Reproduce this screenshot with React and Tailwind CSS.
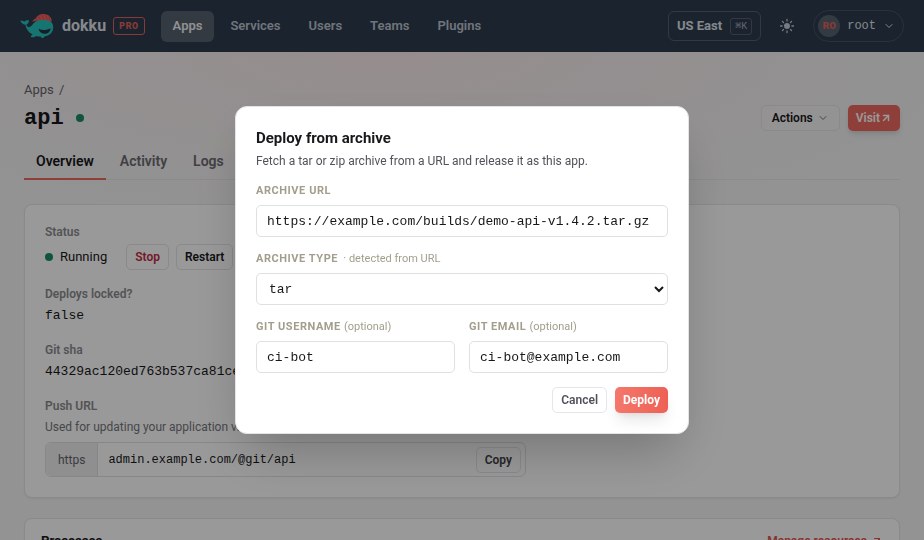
import { useState } from 'react'
import { ChevronDown, ArrowUpRight } from 'lucide-react'

const navItems = ['Apps', 'Services', 'Users', 'Teams', 'Plugins']
const tabs = ['Overview', 'Activity', 'Logs']

const mono = "font-['Liberation_Mono',monospace]"
const labelClass = 'block text-[11px] leading-4 font-bold tracking-wider text-[#a39e8c]'
const hintClass = 'font-normal tracking-normal'
const inputClass =
  "mt-1.5 block h-8 w-full rounded-[5px] border border-[#e0e0e2] bg-white font-['Liberation_Mono',monospace] text-[13px] text-[#18181b] outline-none"
const buttonClass =
  'flex h-[26px] items-center gap-1 rounded-[5px] border border-[#e6e6e9] text-[12px] font-semibold'

function Whale() {
  return (
    <svg className="h-[26px] w-[34px]" viewBox="0 0 34 26" aria-hidden="true">
      <path
        d="M0.300 7.500c1.900.3 3.200.3 4.400 1.100.8-1.100 2.300-1.500 4.300-1.100-.3 2.200-1.200 3.500-2.600 4.200.5 1.900 1.700 2.800 3.200 2.400 2.200-.6 3.200-3.500 5.700-5.300C18.500 6.500 22.500 6 26.200 6.500c4.500.7 7.100 3.800 7 8-.1 5-3.600 8.200-8.700 9-.3.900-1.200 1.700-2.500 1.600-.8-.1-1.200-.7-1.100-1.500-1.700 0-3.300-.2-4.800-.6-.9 1-3.300 1.600-5.300 1.100.1-1.100.8-1.900 1.900-2.500C8.300 19.300 6 15.800 5.400 11.700 2.500 11.300.9 9.900.3 7.500z"
        fill="#26c4bd"
      />
      <path
        d="M12.300 8.700c.6-1.500 1.900-2.700 3.400-3.300C17.200 2.300 20.200.7 24 1c4.700.3 7.500 3.200 7.900 7.600C26 6.400 19 6.200 12.300 8.700z"
        fill="#f6605d"
      />
      <path
        d="M15.500 5.600l1.500 1.600M18 3.300l2.400 3.200M21.300 1.700l2.500 4.700M25.300 1.500l2.100 5.300M28.900 3.500l1.200 4.200"
        stroke="#b34c56"
        strokeWidth="0.7"
      />
      <path d="M18.500 15.800c3.600 1.800 8.200 1.600 12.200-.6-.5 3.600-2.800 5.600-6 5.600-3 0-5.500-1.800-6.200-5z" fill="#263445" />
    </svg>
  )
}

function SunIcon() {
  return (
    <svg className="size-4" viewBox="0 0 16 16" fill="none" stroke="currentColor" strokeWidth="1.3" strokeLinecap="round" aria-hidden="true">
      <circle cx="8" cy="8" r="3" fill="currentColor" stroke="none" />
      <path d="M8 1.500v1.600M8 12.900v1.600M1.500 8h1.600M12.900 8h1.600M3.400 3.400l1.100 1.100M11.500 11.500l1.100 1.100M3.400 12.600l1.100-1.100M11.500 4.500l1.100-1.100" />
    </svg>
  )
}

function Header() {
  return (
    <header className="flex h-[52px] items-center bg-[#2d3b4e] px-5">
      <a href="#" className="flex items-center gap-2 text-[16px] font-bold text-[#dfe3ea]">
        <Whale />
        dokku
      </a>
      <span
        className={`ml-[7px] flex h-[18px] items-center rounded-[3px] border border-[#e2635a] px-[5px] text-[10px] font-bold tracking-wider text-[#e2635a] ${mono}`}
      >
        PRO
      </span>
      <nav className="ml-4 flex gap-1 text-[13px] font-semibold">
        {navItems.map((item, i) => (
          <a
            key={item}
            href="#"
            className={`flex h-[31px] items-center rounded-md px-3 ${
              i === 0 ? 'bg-[#57626f] text-[#eef0f3]' : 'text-[#bdc4ce]'
            }`}
          >
            {item}
          </a>
        ))}
      </nav>
      <div className="ml-auto flex items-center gap-[18px]">
        <button className="flex h-[30px] items-center gap-2 rounded-md border border-[#55606f] px-2 text-[13px] font-bold text-[#dfe3ea]">
          US East
          <kbd className={`flex h-[17px] items-center rounded-[3px] border border-[#55606f] px-1 text-[10px] font-normal text-[#a4acb8] ${mono}`}>
            ⌘K
          </kbd>
        </button>
        <button className="text-[#c6ccd5]" aria-label="Toggle theme">
          <SunIcon />
        </button>
        <button className={`flex h-8 items-center gap-[7px] rounded-full border border-[#465365] pr-2 pl-1 text-[12px] text-[#dfe3ea] ${mono}`}>
          <span className="flex size-[22px] items-center justify-center rounded-full bg-[#57626f] text-[11px] font-bold text-[#e2635a]">
            RO
          </span>
          root
          <ChevronDown size={12} />
        </button>
      </div>
    </header>
  )
}

function Field({ label, children }) {
  return (
    <div>
      <dt className="text-[12px] leading-[15px] font-semibold text-[#8b8b8f]">{label}</dt>
      <dd className="mt-1">{children}</dd>
    </div>
  )
}

function StatusCard() {
  return (
    <section className="mt-6 rounded-lg border border-[#e6e6e9] bg-white p-5 shadow-xs">
      <dl className="flex flex-col gap-[17px] text-[13px] text-[#18181b]">
        <Field label="Status">
          <div className="flex items-center gap-[7px]">
            <span className="size-2 rounded-full bg-[#1b8d67]" />
            <span>Running</span>
            <button className={`${buttonClass} ml-3 px-2 text-[#c22f45]`}>Stop</button>
            <button className={`${buttonClass} px-2`}>Restart</button>
          </div>
        </Field>
        <Field label="Deploys locked?">
          <div className={`leading-5 ${mono}`}>false</div>
        </Field>
        <Field label="Git sha">
          <div className={`leading-5 ${mono}`}>44329ac120ed763b537ca81ce9f20d7a5b6c8e41</div>
        </Field>
        <Field label="Push URL">
          <p className="text-[12px] leading-[18px] text-[#77777c]">Used for updating your application via git push.</p>
          <div className="mt-1.5 flex h-[35px] max-w-[481px] items-center rounded-md border border-[#e2e2e5]">
            <span className="flex h-full items-center rounded-l-md border-r border-[#e2e2e5] bg-[#efeff1] px-3 text-[12px] text-[#63636a]">
              https
            </span>
            <input
              aria-label="Push URL"
              readOnly
              value="admin.example.com/@git/api"
              className={`h-full min-w-0 flex-1 px-2.5 text-[12px] outline-none ${mono}`}
            />
            <button className={`${buttonClass} mr-1 px-2 text-[#3f3f46]`}>Copy</button>
          </div>
        </Field>
      </dl>
    </section>
  )
}

function DeployDialog() {
  const [form, setForm] = useState({
    url: 'https://example.com/builds/demo-api-v1.4.2.tar.gz',
    type: 'tar',
    username: 'ci-bot',
    email: 'ci-bot@example.com',
  })

  const handleChange = (e) => {
    const { name, value } = e.target
    setForm((prev) => ({ ...prev, [name]: value }))
  }

  return (
    <div className="fixed inset-0 flex items-center justify-center bg-black/40 p-4">
      <div
        role="dialog"
        aria-labelledby="deploy-title"
        className="w-full max-w-[454px] rounded-xl border border-[#e4e4e7] bg-white p-5 shadow-2xl"
      >
        <h2 id="deploy-title" className="text-[15px] leading-[22px] font-bold text-[#18181b]">
          Deploy from archive
        </h2>
        <p className="mt-0.5 text-[12px] leading-5 text-[#52525b]">
          Fetch a tar or zip archive from a URL and release it as this app.
        </p>
        <form className="mt-3 flex flex-col gap-3.5" onSubmit={(e) => e.preventDefault()}>
          <div>
            <label htmlFor="url" className={labelClass}>ARCHIVE URL</label>
            <input id="url" name="url" value={form.url} onChange={handleChange} className={`${inputClass} px-2.5`} />
          </div>
          <div>
            <label htmlFor="type" className={labelClass}>
              ARCHIVE TYPE <span className={`${hintClass} ml-0.5`}>· detected from URL</span>
            </label>
            <select id="type" name="type" value={form.type} onChange={handleChange} className={`${inputClass} pl-2`}>
              <option value="tar">tar</option>
              <option value="zip">zip</option>
            </select>
          </div>
          <div className="grid grid-cols-2 gap-3.5">
            <div>
              <label htmlFor="username" className={labelClass}>
                GIT USERNAME <span className={hintClass}>(optional)</span>
              </label>
              <input id="username" name="username" value={form.username} onChange={handleChange} className={`${inputClass} px-2.5`} />
            </div>
            <div>
              <label htmlFor="email" className={labelClass}>
                GIT EMAIL <span className={hintClass}>(optional)</span>
              </label>
              <input id="email" name="email" value={form.email} onChange={handleChange} className={`${inputClass} px-2.5`} />
            </div>
          </div>
          <div className="flex justify-end gap-2">
            <button type="button" className={`${buttonClass} px-2 text-[#52525b]`}>Cancel</button>
            <button
              type="submit"
              className="h-[26px] rounded-[5px] bg-linear-to-r from-[#f4776b] to-[#ee6055] px-2 text-[12px] font-bold text-white shadow-lg"
            >
              Deploy
            </button>
          </div>
        </form>
      </div>
    </div>
  )
}

export default function App() {
  return (
    <div className="h-screen overflow-hidden bg-[#f5f5f6] font-['Roboto',sans-serif] text-[#18181b]">
      <Header />
      <main className="h-full bg-[radial-gradient(ellipse_620px_170px_at_42%_0,#f8ebec,transparent)] px-6 pt-7">
        <nav className="text-[13px] leading-5 text-[#63636a]">
          <a href="#">Apps</a> <span className="ml-0.5">/</span>
        </nav>
        <div className="mt-1 flex h-7 items-center gap-2">
          <h1 className={`text-[22px] font-bold ${mono}`}>api</h1>
          <span className="ml-1 size-2 rounded-full bg-[#1b8d67]" />
          <button className={`${buttonClass} ml-auto bg-white/20 px-2.5`}>
            Actions <ChevronDown size={12} className="text-[#71717a]" />
          </button>
          <button className="flex h-[26px] items-center rounded-[5px] bg-[#ee6a62] px-2 text-[12px] font-semibold text-white shadow-md">
            Visit <ArrowUpRight size={12} strokeWidth={3} />
          </button>
        </div>
        <nav className="mt-3 flex gap-0.5 border-b border-[#e8e8ea] text-[14px] leading-[18px] font-semibold">
          {tabs.map((tab, i) => (
            <a
              key={tab}
              href="#"
              className={`-mb-px border-b-2 px-3 py-2 ${
                i === 0 ? 'border-[#ee6a62]' : 'border-transparent text-[#6b6b72]'
              }`}
            >
              {tab}
            </a>
          ))}
        </nav>
        <StatusCard />
        <section className="mt-5 rounded-lg border border-[#e6e6e9] bg-white p-4 shadow-xs">
          <div className="flex items-center justify-between leading-3">
            <h2 className="text-[13px] font-bold">Processes</h2>
            <a href="#" className="flex items-center gap-1 text-[12px] font-semibold text-[#e0554d]">
              Manage resources <ArrowUpRight size={12} />
            </a>
          </div>
        </section>
      </main>
      <DeployDialog />
    </div>
  )
}
